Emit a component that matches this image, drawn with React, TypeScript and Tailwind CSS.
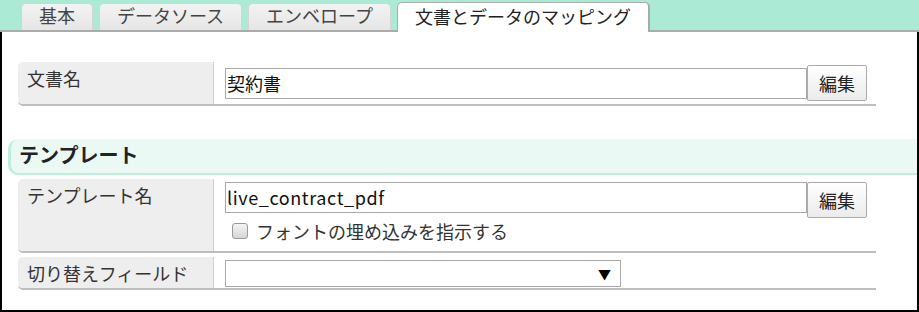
import type { ReactNode } from 'react';

const tabs = ['基本', 'データソース', 'エンベロープ'];

function Tab({ label, active }: { label: string; active?: boolean }) {
  if (active) {
    return (
      <div className="h-[30px] -mb-[2px] px-[17px] pt-[1px] bg-white border-l border-r-2 border-t border-[#aaaaaa] rounded-t-[5px] text-[18px] leading-[24px] text-[#222]">
        {label}
      </div>
    );
  }
  return (
    <div className="h-[27px] px-[17px] bg-gradient-to-b from-[#f3f3f3] to-[#e6e6e6] border border-b-0 border-[#d4d4d4] rounded-t-[5px] text-[18px] leading-[22px] text-[#444]">
      {label}
    </div>
  );
}

function Row({ label, children, className }: { label: string; children: ReactNode; className?: string }) {
  return (
    <div className={`flex w-[858px] border-b-2 border-[#bdbdbd] rounded-bl-[5px] ${className ?? ''}`}>
      <div className="w-[196px] shrink-0 bg-[#eeeeee] rounded-l-[5px] border-r border-[#cfcfcf] pl-[9px] pt-[3px] text-[18px] leading-[26px] text-[#333]">
        {label}
      </div>
      <div className="flex-1 pl-[11px]">{children}</div>
    </div>
  );
}

function EditButton() {
  return (
    <button className="w-[60px] h-[36px] shrink-0 bg-gradient-to-b from-white to-[#ebebeb] border border-[#ababab] rounded-[2px] text-[18px] text-[#222]">
      編集
    </button>
  );
}

export default function App() {
  return (
    <div className="w-[919px] h-[312px] bg-white font-['Noto_Sans_CJK_JP','Noto_Sans',sans-serif]">
      {/* Tab bar */}
      <div className="h-[32px] flex items-end gap-[6px] pl-[21px] bg-[#abebd6] border-b-2 border-[#ababab]">
        {tabs.map((t) => (
          <Tab key={t} label={t} />
        ))}
        <Tab label="文書とデータのマッピング" active />
      </div>

      {/* Content */}
      <div className="h-[280px] border-x-2 border-b-2 border-black pt-[30px]">
        <Row label="文書名" className="ml-[16px]">
          <div className="h-[42px] flex items-center">
            <div className="w-[582px] h-[31px] border border-[#aaaaaa] px-[1px] text-[18px] leading-[29px] text-[#111]">
              契約書
            </div>
            <EditButton />
          </div>
        </Row>

        {/* Section header */}
        <div className="mt-[33px] ml-[6px] h-[36px] flex items-center pl-[8px] pb-[2px] bg-[#eaf9f4] border-l-[3px] border-b-2 border-[#bdeedb] rounded-l-[10px] text-[20px] font-bold text-[#222]">
          テンプレート
        </div>

        <Row label="テンプレート名" className="ml-[16px] mt-[4px]">
          <div className="pt-[3px] flex items-start">
            <div className="w-[582px] h-[31px] border border-[#aaaaaa] px-[1px] text-[18px] leading-[29px] tracking-[0.6px] text-[#111]">
              live_contract_pdf
            </div>
            <EditButton />
          </div>
          <label className="h-[26px] mb-[7px] flex items-center pl-[7px] text-[18px] text-[#333]">
            <span className="block shrink-0 w-[16px] h-[16px] mr-[8px] rounded-[3px] border border-[#9a9a9a] bg-gradient-to-b from-[#f4f4f4] to-[#d6d6d6]" />
            フォントの埋め込みを指示する
          </label>
        </Row>

        <Row label="切り替えフィールド" className="ml-[16px] mt-[4px]">
          <div className="pt-[3px] pb-[1px]">
            <div className="w-[396px] h-[27px] border border-[#aaaaaa] flex items-center justify-end pr-[9px] text-[13px] text-black">
              ▼
            </div>
          </div>
        </Row>
      </div>
    </div>
  );
}
